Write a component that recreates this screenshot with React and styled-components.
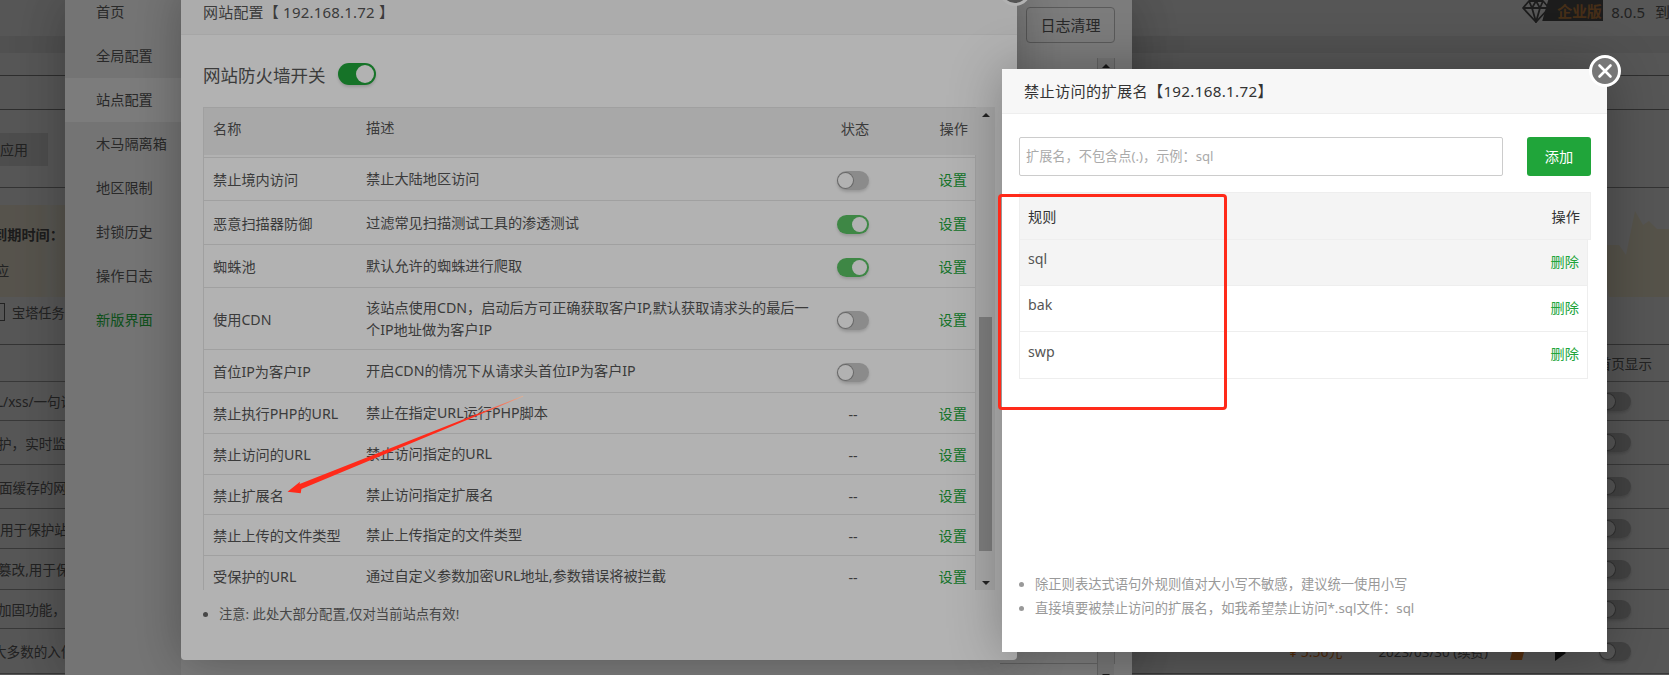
import React from 'react';
import styled, { createGlobalStyle } from 'styled-components';

const GlobalStyle = createGlobalStyle`
  html, body {
    margin: 0;
    padding: 0;
    height: 675px;
    overflow: hidden;
    background: #fff;
    font-family: "Noto Sans", "Noto Sans CJK SC", sans-serif;
    color: #555;
  }
  * { box-sizing: border-box; }
`;

const Screen = styled.div`
  position: relative;
  width: 1669px;
  height: 675px;
  overflow: hidden;
  background: #fff;
`;

const Shade = styled.div`
  position: absolute;
  inset: 0;
  background: rgba(0, 0, 0, ${p => p.$alpha});
`;

/* ---------- page behind the popups ---------- */

const TopBar = styled.div`
  height: 36px;
  display: flex;
  justify-content: flex-end;
  align-items: flex-start;
  background: #fff;
  white-space: nowrap;
`;

const Edition = styled.div`
  width: 61px;
  height: 21px;
  margin-left: -8px;
  background: #555;
  clip-path: polygon(6px 0, 100% 0, 100% 100%, 0 100%);
  color: #d08c48;
  font-size: 15px;
  font-weight: 700;
  line-height: 22px;
  padding-left: 15px;
  letter-spacing: -0.2px;
`;

const Version = styled.span`
  font-size: 15px;
  line-height: 24px;
  margin-left: ${p => p.$gap}px;
  width: ${p => p.$w}px;
  color: #666;
`;

const Band = styled.div`
  height: 17px;
  background: #eee;
`;

const LineBox = styled.div`
  height: ${p => p.$h}px;
  border-bottom: 1px solid #888;
`;

const AppTabs = styled.div`
  height: 78px;
  padding-top: 23px;
  border-bottom: 1px solid #999;
`;

const AppButton = styled.div`
  width: 48px;
  height: 33px;
  background: #e4e4e4;
  font-size: 14px;
  line-height: 33px;
  text-align: right;
  padding-right: 23px;
  white-space: nowrap;
  color: #666;
`;

const Promo = styled.div`
  position: relative;
  height: 92px;
  margin-top: 17px;
  background: linear-gradient(90deg, #fff7e2 0, #fff7e2 40px, #fffdf0 50px, #fff7e2 65px, #fff7e2 100%);
  overflow: hidden;
`;

const Scenery = styled.svg`
  position: absolute;
  right: 0;
  top: 0;
`;

const PromoTitle = styled.div`
  margin: 19px 0 0 -7px;
  font-size: 14.2px;
  font-weight: 700;
  color: #555;
  white-space: nowrap;
`;

const PromoText = styled.div`
  margin: 16px 0 0 -5px;
  font-size: 14.2px;
  color: #666;
`;

const TaskRow = styled.div`
  height: 48px;
  display: flex;
  align-items: flex-start;
  gap: 7px;
  padding-top: 6px;
  font-size: 13.2px;
  line-height: 20px;
  color: #666;
  border-bottom: 1px solid #999;
  white-space: nowrap;
`;

const TaskIcon = styled.span`
  display: block;
  width: 8px;
  height: 18px;
  margin-left: -3px;
  border: 1px solid #666;
`;

const SiteRow = styled.div`
  height: ${p => p.$h}px;
  display: flex;
  align-items: center;
  padding-right: ${p => p.$pad || 38}px;
  border-bottom: 1px solid #aaa;
  font-size: 13.6px;
  color: #666;
  white-space: nowrap;
`;

const SiteText = styled.span`
  margin-left: ${p => p.$shift || 0}px;
`;

const SiteEnd = styled.div`
  margin-left: auto;
  display: flex;
  align-items: center;
`;

const Price = styled.span`
  color: #e87a1d;
  font-size: 14px;
  margin-right: 36px;
`;

const DateText = styled.span`
  font-size: 13.4px;
  margin-right: 22px;
`;

const Flag = styled.span`
  display: block;
  width: 15px;
  height: 12px;
  margin: 6px 30px 0 0;
  background: #f58a30;
  clip-path: polygon(3px 0, 100% 0, 12px 100%, 0 100%);
`;

const Play = styled.span`
  display: block;
  width: 0;
  height: 0;
  margin: 4px 33px 0 0;
  border-left: 11px solid #222;
  border-top: 8px solid transparent;
  border-bottom: 8px solid transparent;
`;

/* ---------- site settings panel ---------- */

const Panel = styled.div`
  position: absolute;
  left: 65px;
  top: 0;
  width: 1067px;
  height: 675px;
  display: flex;
  background: #fff;
  box-shadow: 1px 1px 50px rgba(0, 0, 0, 0.3);
`;

const SideNav = styled.div`
  width: 116px;
  margin-top: -10px;
  background: #efefef;
  flex-shrink: 0;
`;

const SideItem = styled.div`
  height: 44px;
  line-height: 44px;
  padding-left: 31px;
  font-size: 14.2px;
  color: ${p => (p.$green ? '#20a53a' : '#555')};
  background: ${p => (p.$active ? '#fff' : 'transparent')};
`;

const PanelMain = styled.div`
  flex: 1;
  display: flex;
  flex-direction: column;
  align-items: flex-end;
  padding: 7px 17px 0 0;
`;

const ClearButton = styled.div`
  width: 89px;
  height: 36px;
  border: 1px solid #bbb;
  border-radius: 4px;
  font-size: 15px;
  line-height: 34px;
  text-align: center;
  color: #555;
`;

const LogBox = styled.div`
  position: relative;
  width: 115px;
  margin-top: 15px;
  height: 606px;
  border-bottom: 1px solid #ccc;
  border-right: 1px solid #ccc;
`;

const LogScroll = styled.div`
  position: absolute;
  right: 0;
  top: 0;
  bottom: -20px;
  width: 17px;
  background: #f1f1f1;
  border-left: 1px solid #ccc;
`;

/* ---------- popups ---------- */

const CloseRing = styled.div`
  position: absolute;
  top: -14px;
  right: -14px;
  width: 32px;
  height: 32px;
  border-radius: 50%;
  border: 3px solid #fff;
  background: #777;
  display: flex;
  align-items: center;
  justify-content: center;
`;

const ConfigModal = styled.div`
  position: absolute;
  left: 181px;
  top: -12px;
  width: 836px;
  height: 672px;
  background: #fff;
  border-radius: 4px;
  box-shadow: 1px 1px 50px rgba(0, 0, 0, 0.3);
`;

const ModalHead = styled.div`
  height: ${p => p.$h}px;
  line-height: ${p => p.$line}px;
  padding-left: 22px;
  background: #f7f7f7;
  border-bottom: 1px solid #eee;
  font-size: 15px;
  letter-spacing: 0.2px;
  color: #555;
`;

const ConfigBody = styled.div`
  padding: 0 22px;
`;

const SwitchRow = styled.div`
  height: 72px;
  display: flex;
  align-items: center;
  gap: 12px;
  padding-top: 6px;
  font-size: 17.5px;
  color: #555;
`;

const Toggle = styled.span`
  position: relative;
  display: inline-block;
  width: ${p => (p.$big ? 38 : 32)}px;
  height: ${p => (p.$big ? 22 : 19)}px;
  border-radius: 11px;
  background: ${p => (p.$on ? (p.$big ? '#20a53a' : '#59c263') : '#c8c8c8')};
  box-shadow: 0 2px 3px rgba(0, 0, 0, 0.15);
  &::after {
    content: '';
    position: absolute;
    top: 2px;
    left: ${p => (p.$on ? 'auto' : '1px')};
    right: ${p => (p.$on ? '2px' : 'auto')};
    width: ${p => (p.$big ? 18 : 15)}px;
    height: ${p => (p.$big ? 18 : 15)}px;
    border-radius: 50%;
    background: #fff;
    box-shadow: 0 0 0 1px rgba(0, 0, 0, ${p => (p.$on ? 0 : 0.25)});
  }
`;

const TableFrame = styled.div`
  height: 483px;
  display: flex;
  overflow: hidden;
`;

const RuleTable = styled.div`
  flex: 1;
  min-width: 0;
  border-right: 1px solid #e5e5e5;
  border-left: 1px solid #e5e5e5;
`;

const RuleRow = styled.div`
  display: grid;
  grid-template-columns: 152px 457px 80px 1fr;
  align-items: center;
  height: ${p => p.$h}px;
  border-bottom: 1px solid #e5e5e5;
  font-size: 14.2px;
  color: #555;
`;

const RuleHead = styled(RuleRow)`
  background: #f1f1f1;
  border-top: 1px solid #e5e5e5;
  border-bottom: none;
  margin-right: -1px;
  padding-bottom: 8px;
`;

const HeadGap = styled.div`
  height: 3px;
  border-bottom: 1px solid #e5e5e5;
`;

const NameCell = styled.div`
  padding-left: 9px;
`;

const DescCell = styled.div`
  padding: 0 0 0 10px;
  line-height: 22px;
`;

const StateCell = styled.div`
  display: flex;
  justify-content: center;
  padding-top: ${p => (p.$head ? 0 : 3)}px;
  padding-left: ${p => (p.$head ? 4 : 0)}px;
`;

const ActionCell = styled.div`
  padding-right: 8px;
  text-align: right;
`;

const SetLink = styled.span`
  color: #20a53a;
`;

const DeleteLink = styled(SetLink)`
  margin-top: -4px;
`;

const Scrollbar = styled.div`
  position: relative;
  width: 19px;
  flex-shrink: 0;
  background: #f1f1f1;
`;

const Thumb = styled.div`
  position: absolute;
  top: 210px;
  left: 3px;
  width: 13px;
  height: 234px;
  background: #b3b3b3;
`;

const ScrollArrow = styled.span`
  position: absolute;
  left: ${p => p.$left || 6}px;
  ${p => (p.$down ? 'bottom: 5px;' : 'top: 6px;')}
  width: 0;
  height: 0;
  border-left: 4px solid transparent;
  border-right: 4px solid transparent;
  ${p => (p.$down ? 'border-top: 4px solid #333;' : 'border-bottom: 4px solid #333;')}
`;

const Notes = styled.ul`
  margin: ${p => p.$top || 0}px 0 0;
  padding: 0 0 0 16px;
  font-size: 13.3px;
  line-height: 24px;
  color: ${p => p.$color || '#999'};
`;

const ExtModal = styled.div`
  position: absolute;
  left: 1002px;
  top: 69px;
  width: 605px;
  height: 583px;
  display: flex;
  flex-direction: column;
  background: #fff;
  box-shadow: 1px 1px 50px rgba(0, 0, 0, 0.3);
`;

const ExtTitle = styled(ModalHead)`
  color: #333;
  font-size: 15.2px;
  letter-spacing: 0.3px;
`;

const ExtBody = styled.div`
  flex: 1;
  display: flex;
  flex-direction: column;
  padding: 23px 16px 32px 17px;
`;

const InputRow = styled.div`
  display: flex;
  gap: 24px;
`;

const ExtInput = styled.div`
  width: 484px;
  height: 39px;
  padding-left: 6px;
  border: 1px solid #ccc;
  border-radius: 2px;
  font-size: 13.2px;
  line-height: 37px;
  color: #aaa;
`;

const AddButton = styled.div`
  width: 64px;
  height: 39px;
  border-radius: 3px;
  background: #20a53a;
  color: #fff;
  font-size: 14.2px;
  line-height: 39px;
  text-align: center;
`;

const ExtHead = styled.div`
  display: flex;
  justify-content: space-between;
  align-items: center;
  height: 48px;
  margin-top: 16px;
  padding: 0 10px 0 8px;
  background: #f4f4f4;
  border: 1px solid #eee;
  font-size: 14.2px;
  color: #333;
`;

const ExtRows = styled.div`
  width: 569px;
  border: 1px solid #eee;
  border-top: none;
`;

const ExtRow = styled.div`
  display: flex;
  justify-content: space-between;
  align-items: center;
  height: 46px;
  padding: 0 8px;
  background: ${p => (p.$hover ? '#f4f4f4' : '#fff')};
  border-bottom: 1px solid #eee;
  font-size: 14.2px;
  color: #555;
  &:last-child { border-bottom: none; }
`;

const ExtName = styled.span`
  margin-top: -8px;
`;

const NotesWrap = styled.div`
  margin-top: auto;
`;

/* ---------- annotation on top of the screenshot ---------- */

const RedBox = styled.div`
  position: absolute;
  left: 998px;
  top: 194px;
  width: 229px;
  height: 216px;
  border: 3px solid #ff2a1a;
  border-radius: 4px;
`;

const ArrowMark = styled.svg`
  position: absolute;
  left: 280px;
  top: 390px;
`;

const CloseIcon = () => (
  <svg width="18" height="18" viewBox="0 0 18 18" fill="none">
    <path d="M3.5 3.5 14.5 14.5M14.5 3.5 3.5 14.5" stroke="#fff" strokeWidth="2.6" strokeLinecap="round" />
  </svg>
);

const DiamondIcon = () => (
  <svg width="28" height="23" viewBox="0 0 28 23" fill="none" stroke="#555" strokeWidth="1.8" strokeLinejoin="round">
    <path d="M7 1h14l6 7-13 14L1 8z" />
    <path d="M1 8h26M7 1l3 7 4 14 4-14 3-7M10 8l4-7 4 7" />
  </svg>
);

const navItems = ['首页', '全局配置', '站点配置', '木马隔离箱', '地区限制', '封锁历史', '操作日志', '新版界面'];

const rules = [
  { name: '禁止境内访问', desc: '禁止大陆地区访问', state: 'off', h: 43 },
  { name: '恶意扫描器防御', desc: '过滤常见扫描测试工具的渗透测试', state: 'on', h: 44 },
  { name: '蜘蛛池', desc: '默认允许的蜘蛛进行爬取', state: 'on', h: 43 },
  { name: '使用CDN', desc: '该站点使用CDN，启动后方可正确获取客户IP,默认获取请求头的最后一个IP地址做为客户IP', state: 'off', h: 62 },
  { name: '首位IP为客户IP', desc: '开启CDN的情况下从请求头首位IP为客户IP', state: 'off', h: 43, noLink: true },
  { name: '禁止执行PHP的URL', desc: '禁止在指定URL运行PHP脚本', h: 41 },
  { name: '禁止访问的URL', desc: '禁止访问指定的URL', h: 41 },
  { name: '禁止扩展名', desc: '禁止访问指定扩展名', h: 40 },
  { name: '禁止上传的文件类型', desc: '禁止上传指定的文件类型', h: 41 },
  { name: '受保护的URL', desc: '通过自定义参数加密URL地址,参数错误将被拦截', h: 41 },
];

const sites = [
  { text: 'L/xss/一句话木马等常见渗透攻击', shift: -4, h: 39 },
  { text: '护，实时监控网站', shift: -2, h: 44 },
  { text: '面缓存的网页内容', shift: -1, h: 44 },
  { text: '用于保护站点内容', h: 40 },
  { text: '篡改,用于保护网站', shift: -2, h: 41 },
  { text: '加固功能，防止入侵', shift: -2, h: 39 },
];

const App = () => {
  return (
    <Screen>
      <GlobalStyle />

      <TopBar>
        <DiamondIcon />
        <Edition>企业版</Edition>
        <Version $gap={8}>8.0.5</Version>
        <Version $gap={10} $w={14}>到</Version>
      </TopBar>
      <Band />
      <LineBox $h={23} />
      <LineBox $h={34} />
      <AppTabs>
        <AppButton>应用</AppButton>
      </AppTabs>
      <Promo>
        <Scenery width="70" height="92" viewBox="0 0 70 92">
          <rect width="70" height="92" fill="#fdfdfd" />
          <path d="M0 40 H20 L27 50 L36 6 L44 20 L50 16 L58 24 H70 V92 H10 Z" fill="#fff6dc" />
          <rect x="0" y="0" width="8" height="92" fill="#fff6dc" />
        </Scenery>
        <PromoTitle>到期时间：</PromoTitle>
        <PromoText>应</PromoText>
      </Promo>
      <TaskRow>
        <TaskIcon />
        <span>宝塔任务</span>
      </TaskRow>
      <SiteRow $h={37} $pad={17}>
        <SiteEnd>首页显示</SiteEnd>
      </SiteRow>
      {sites.map(s => (
        <SiteRow key={s.text} $h={s.h}>
          <SiteText $shift={s.shift}>{s.text}</SiteText>
          <SiteEnd><Toggle /></SiteEnd>
        </SiteRow>
      ))}
      <SiteRow $h={45}>
        <SiteText $shift={-7}>大多数的入侵</SiteText>
        <SiteEnd>
          <Price>¥ 5.56元</Price>
          <DateText>2023/03/30 (续费)</DateText>
          <Flag />
          <Play />
          <Toggle />
        </SiteEnd>
      </SiteRow>

      <Shade $alpha={0.3} />

      <Panel>
        <SideNav>
          {navItems.map(item => (
            <SideItem key={item} $active={item === '站点配置'} $green={item === '新版界面'}>{item}</SideItem>
          ))}
        </SideNav>
        <PanelMain>
          <ClearButton>日志清理</ClearButton>
          <LogBox>
            <LogScroll>
              <ScrollArrow $left={4} />
              <ScrollArrow $left={4} $down />
            </LogScroll>
          </LogBox>
        </PanelMain>
      </Panel>

      <Shade $alpha={0.3} />

      <ConfigModal>
        <CloseRing><CloseIcon /></CloseRing>
        <ModalHead $h={47} $line={48}>网站配置【 192.168.1.72 】</ModalHead>
        <ConfigBody>
          <SwitchRow>
            网站防火墙开关
            <Toggle $big $on />
          </SwitchRow>
          <TableFrame>
            <RuleTable>
              <RuleHead $h={48}>
                <NameCell>名称</NameCell>
                <DescCell>描述</DescCell>
                <StateCell $head>状态</StateCell>
                <ActionCell>操作</ActionCell>
              </RuleHead>
              <HeadGap />
              {rules.map(r => (
                <RuleRow key={r.name} $h={r.h}>
                  <NameCell>{r.name}</NameCell>
                  <DescCell>{r.desc}</DescCell>
                  <StateCell>
                    {r.state ? <Toggle $on={r.state === 'on'} /> : '--'}
                  </StateCell>
                  <ActionCell>{!r.noLink && <SetLink>设置</SetLink>}</ActionCell>
                </RuleRow>
              ))}
            </RuleTable>
            <Scrollbar>
              <ScrollArrow />
              <Thumb />
              <ScrollArrow $down />
            </Scrollbar>
          </TableFrame>
          <Notes $top={12} $color="#666">
            <li>注意: 此处大部分配置,仅对当前站点有效!</li>
          </Notes>
        </ConfigBody>
      </ConfigModal>

      <Shade $alpha={0.3} />

      <ExtModal>
        <CloseRing><CloseIcon /></CloseRing>
        <ExtTitle $h={45} $line={44}>禁止访问的扩展名【192.168.1.72】</ExtTitle>
        <ExtBody>
          <InputRow>
            <ExtInput>扩展名，不包含点(.)，示例：sql</ExtInput>
            <AddButton>添加</AddButton>
          </InputRow>
          <ExtHead>
            <span>规则</span>
            <span>操作</span>
          </ExtHead>
          <ExtRows>
            {['sql', 'bak', 'swp'].map((ext, i) => (
              <ExtRow key={ext} $hover={i === 0}>
                <ExtName>{ext}</ExtName>
                <DeleteLink>删除</DeleteLink>
              </ExtRow>
            ))}
          </ExtRows>
          <NotesWrap>
            <Notes>
              <li>除正则表达式语句外规则值对大小写不敏感，建议统一使用小写</li>
              <li>直接填要被禁止访问的扩展名，如我希望禁止访问*.sql文件：sql</li>
            </Notes>
          </NotesWrap>
        </ExtBody>
      </ExtModal>

      <RedBox />
      <ArrowMark width="250" height="110" viewBox="280 390 250 110">
        <defs>
          <linearGradient id="arrowFade" x1="287" y1="492" x2="523" y2="396" gradientUnits="userSpaceOnUse">
            <stop offset="0.8" stopColor="#ff2a1a" />
            <stop offset="1" stopColor="#e8b090" />
          </linearGradient>
        </defs>
        <path d="M287.5 491.7 300 481.7 299.6 483.9 523 395.8 523.2 396.4 301.4 489 300.7 493.3Z" fill="url(#arrowFade)" />
      </ArrowMark>
    </Screen>
  );
};

export default App;
